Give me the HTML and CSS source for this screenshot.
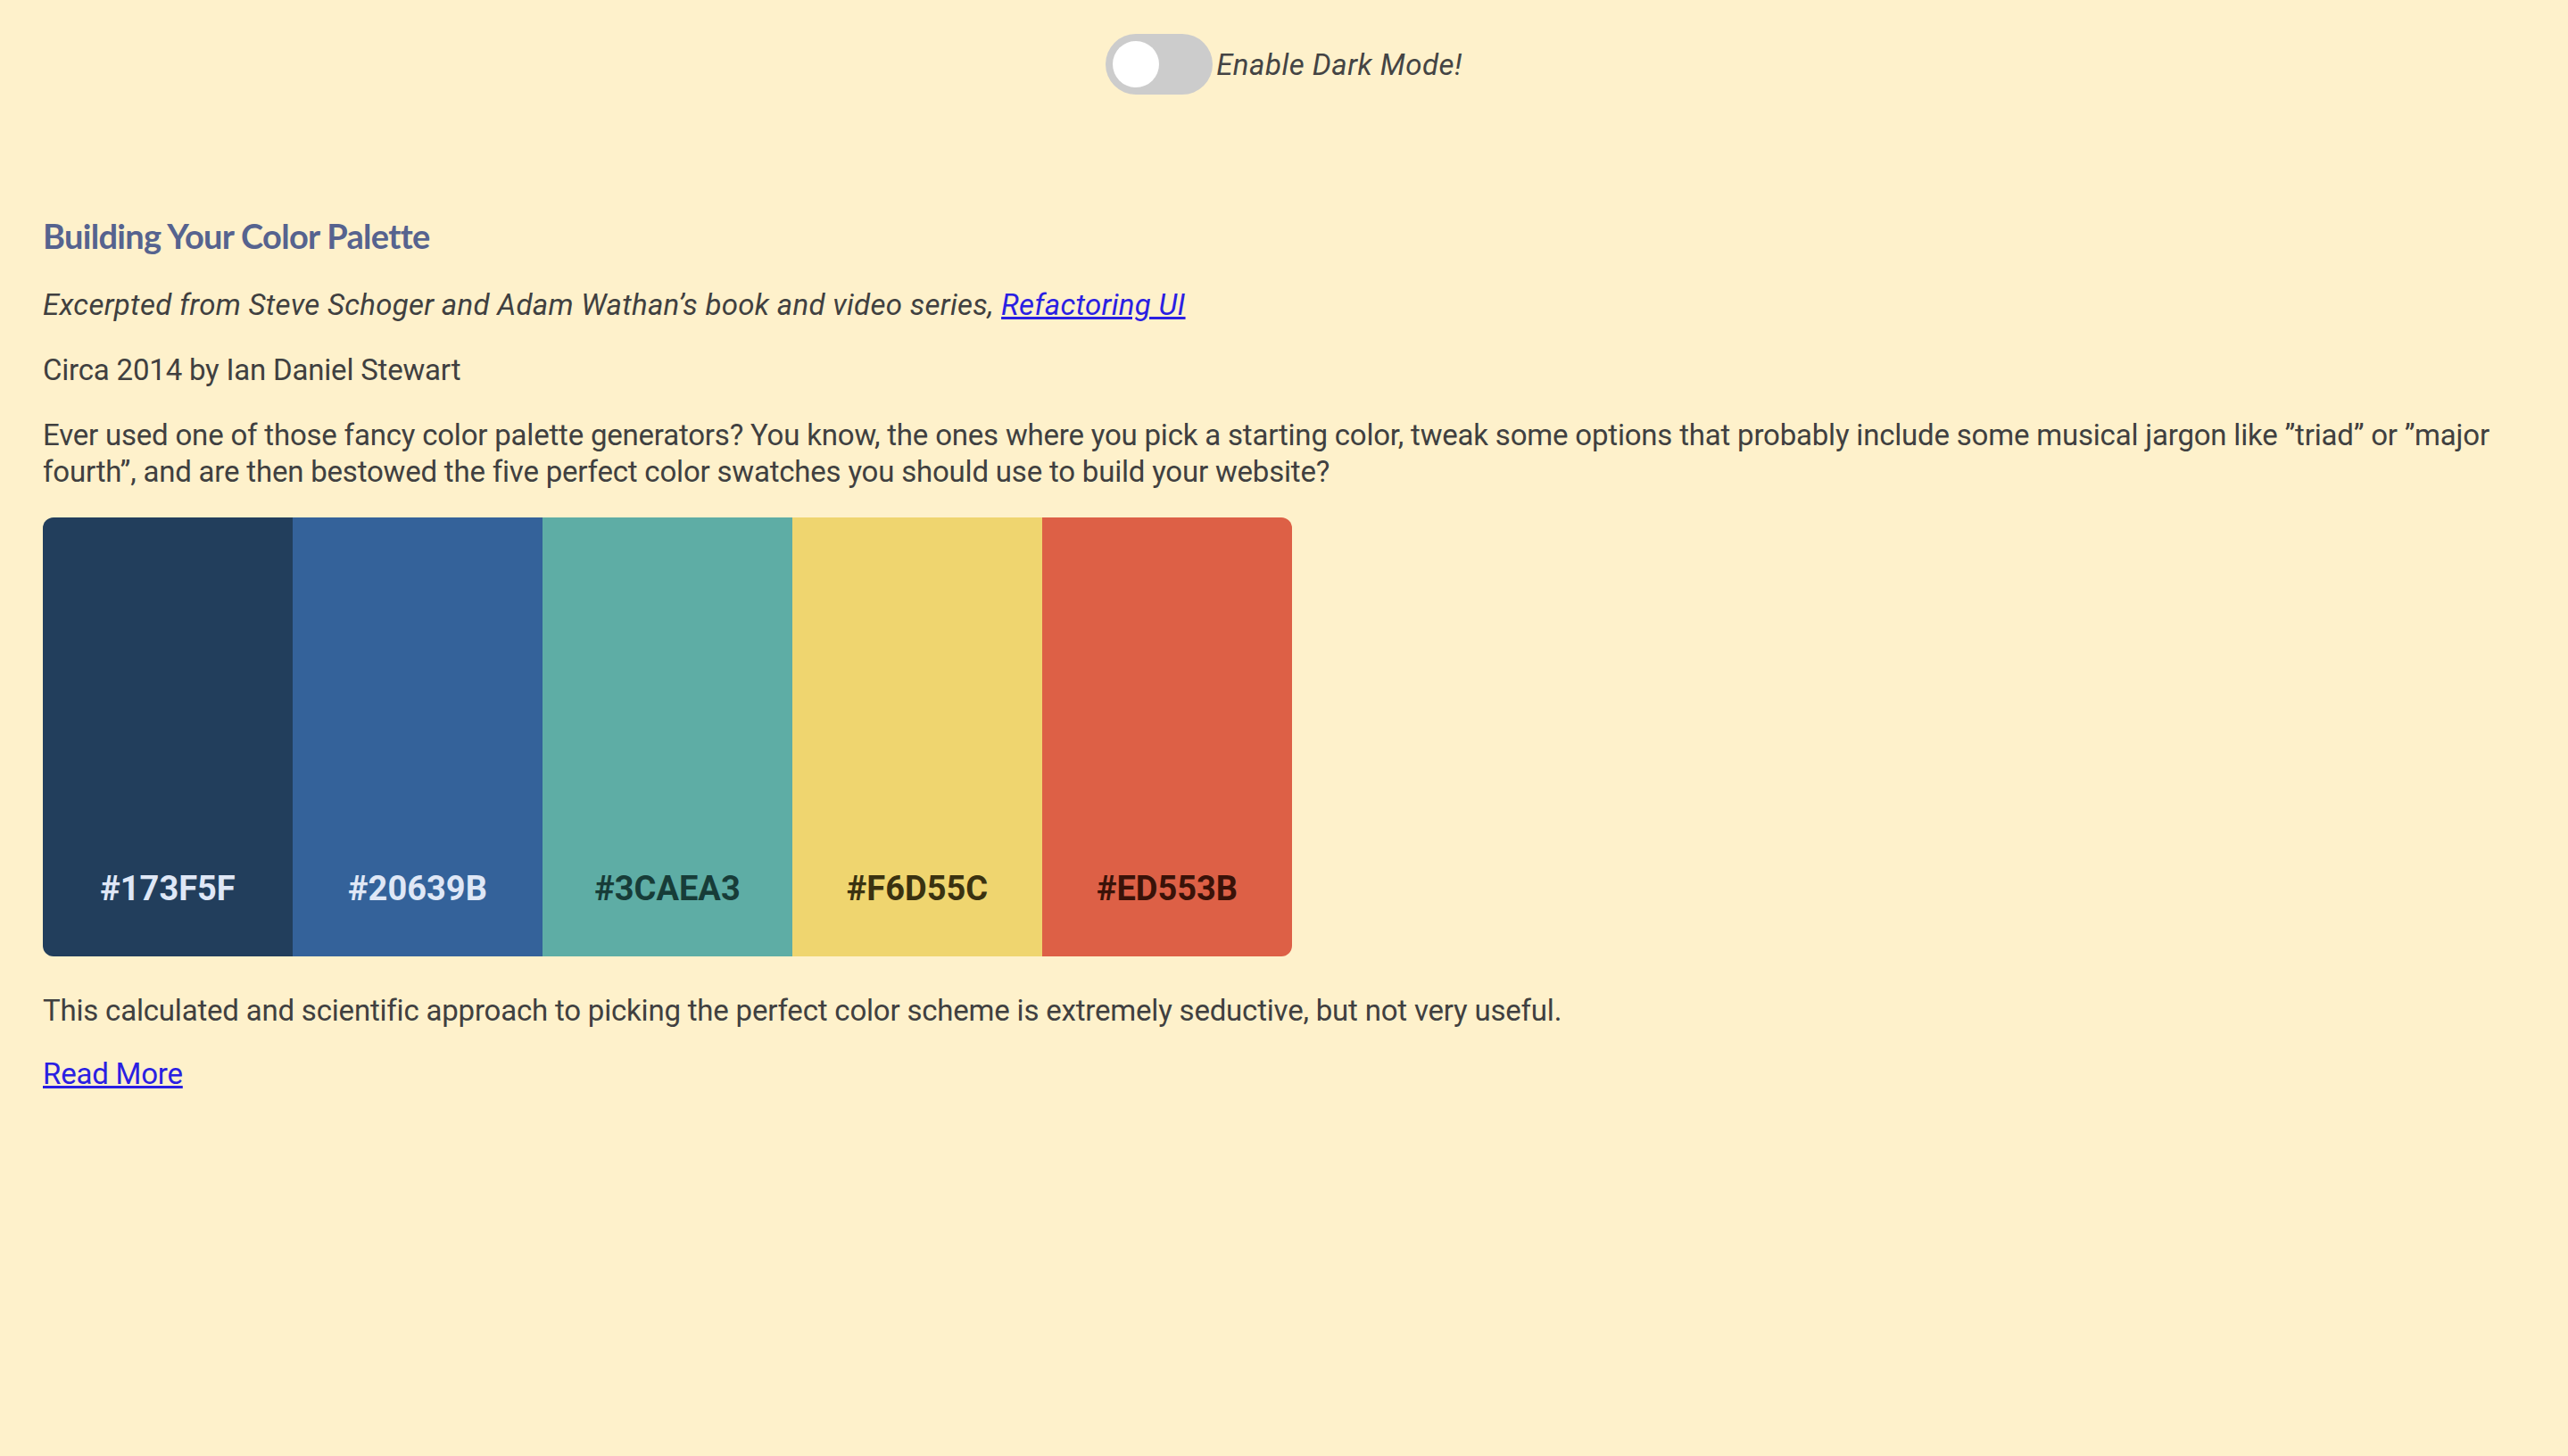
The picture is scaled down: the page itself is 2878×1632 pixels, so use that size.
FILE: index.html
```html
<!DOCTYPE html>
<html lang="en">
<head>
<meta charset="utf-8">
<title>Building Your Color Palette</title>
<link rel="stylesheet" href="styles.css">
</head>
<body>
<header class="topbar">
  <span class="toggle"><span class="knob"></span></span>
  <span class="toggle-label">Enable Dark Mode!</span>
</header>
<main class="article">
  <h2 class="title">Building Your Color Palette</h2>
  <p class="excerpt">Excerpted from Steve Schoger and Adam Wathan’s book and video series, <a href="#">Refactoring UI</a></p>
  <p>Circa 2014 by Ian Daniel Stewart</p>
  <p>Ever used one of those fancy color palette generators? You know, the ones where you pick a starting color, tweak some options that probably include some musical jargon like ”triad” or ”major fourth”, and are then bestowed the five perfect color swatches you should use to build your website?</p>
  <div class="palette">
    <div class="swatch s1"><span>#173F5F</span></div>
    <div class="swatch s2"><span>#20639B</span></div>
    <div class="swatch s3"><span>#3CAEA3</span></div>
    <div class="swatch s4"><span>#F6D55C</span></div>
    <div class="swatch s5"><span>#ED553B</span></div>
  </div>
  <p class="after">This calculated and scientific approach to picking the perfect color scheme is extremely seductive, but not very useful.</p>
  <p class="more"><a href="#">Read More</a></p>
</main>
</body>
</html>
```
FILE: styles.css
```css
html, body {
  margin: 0;
  padding: 0;
}
body {
  background: #fef1cb;
  color: #404040;
  font-family: Roboto, "Noto Sans", sans-serif;
  font-size: 33px;
  line-height: 41px;
  letter-spacing: -0.2px;
}
.topbar {
  display: flex;
  justify-content: center;
  align-items: center;
  padding-top: 38px;
  gap: 4px;
}
.toggle {
  width: 120px;
  height: 68px;
  border-radius: 34px;
  background: #cccccc;
  display: flex;
  align-items: center;
  padding-left: 8px;
  box-sizing: border-box;
}
.knob {
  width: 52px;
  height: 52px;
  border-radius: 50%;
  background: #ffffff;
}
.toggle-label {
  font-style: italic;
  color: #444;
  letter-spacing: 0.5px;
}
.article {
  padding: 135px 48px 0 48px;
}
.title {
  margin: 0;
  font-family: Lato, "Open Sans", sans-serif;
  font-weight: 700;
  font-size: 38px;
  line-height: 46px;
  letter-spacing: -0.7px;
  color: #56638f;
}
p {
  margin: 32px 0 0 0;
}
.excerpt {
  font-style: italic;
  margin-top: 34px;
  letter-spacing: 0.3px;
}
a {
  color: #2a20e2;
  text-decoration: underline;
}
.palette {
  display: flex;
  margin-top: 31px;
  width: 1400px;
  height: 492px;
  border-radius: 12px;
  overflow: hidden;
}
.swatch {
  flex: 1;
  display: flex;
  justify-content: center;
  align-items: flex-end;
  padding-bottom: 54px;
  font-family: Roboto, "Liberation Sans", sans-serif;
  font-weight: 700;
  font-size: 38px;
  line-height: 44px;
  letter-spacing: 0;
}
.s1 { background: #223e5c; color: #dfe7f6; }
.s2 { background: #34629a; color: #dfe7f6; }
.s3 { background: #5eada5; color: #173c38; }
.s4 { background: #efd56f; color: #3a3210; }
.s5 { background: #dd6046; color: #3a1208; }
.after {
  margin-top: 40px;
}
.more {
  margin-top: 30px;
}
```
